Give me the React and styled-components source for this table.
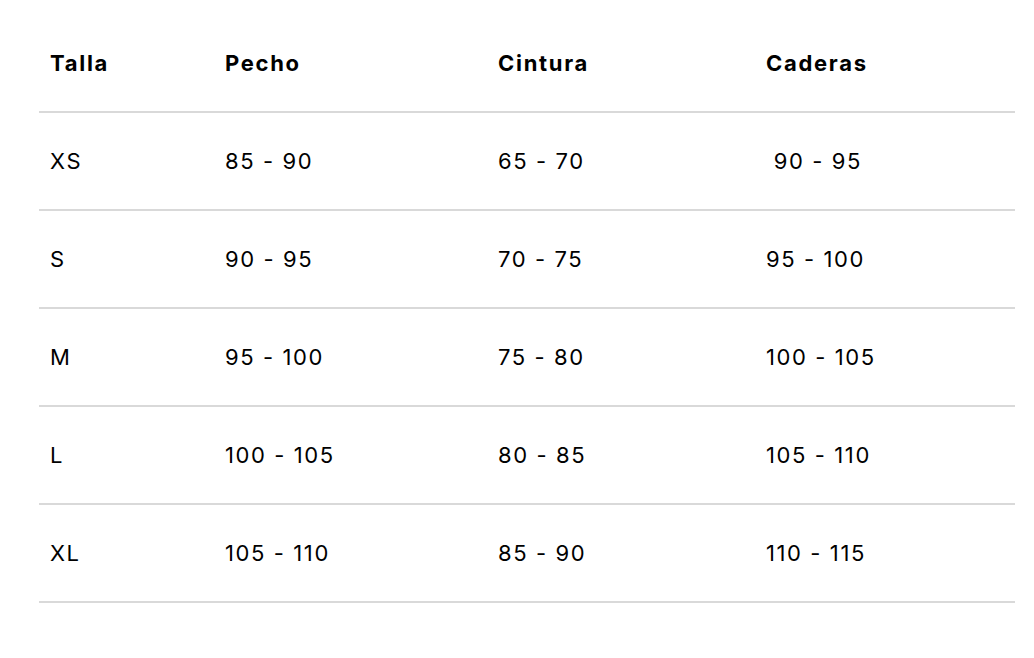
import React from "react";
import styled, { createGlobalStyle } from "styled-components";

const GlobalStyle = createGlobalStyle`
  body {
    margin: 0;
    background: #ffffff;
    font-family: Inter, "Liberation Sans", Arial, sans-serif;
    color: #000000;
  }
`;

const rows = [
  { size: "XS", chest: "85 - 90", waist: "65 - 70", hips: "\u00a090 - 95" },
  { size: "S", chest: "90 - 95", waist: "70 - 75", hips: "95 - 100" },
  { size: "M", chest: "95 - 100", waist: "75 - 80", hips: "100 - 105" },
  { size: "L", chest: "100 - 105", waist: "80 - 85", hips: "105 - 110" },
  { size: "XL", chest: "105 - 110", waist: "85 - 90", hips: "110 - 115" },
];

const App = () => {
  return (
    <>
      <GlobalStyle />
      <StPage>
        <StTable>
          <StRow>
            <StCell head>Talla</StCell>
            <StCell head>Pecho</StCell>
            <StCell head>Cintura</StCell>
            <StCell head>Caderas</StCell>
          </StRow>
          {rows.map((row) => (
            <StRow key={row.size}>
              <StCell>{row.size}</StCell>
              <StCell>{row.chest}</StCell>
              <StCell>{row.waist}</StCell>
              <StCell>{row.hips}</StCell>
            </StRow>
          ))}
        </StTable>
      </StPage>
    </>
  );
};

export default App;

const StPage = styled.div`
  padding: 15px 19px 0 39px;
`;

const StTable = styled.div`
  display: flex;
  flex-direction: column;
  width: 976px;
`;

const StRow = styled.div`
  display: grid;
  grid-template-columns: 175px 273px 268px 1fr;
  height: 96px;
  align-items: center;
  border-bottom: 2px solid #d9d9d9;
`;

const StCell = styled.div`
  padding-left: 11px;
  font-size: 22px;
  font-weight: ${(props) => (props.head ? 700 : 400)};
  letter-spacing: ${(props) => (props.head ? "1.7px" : "1.6px")};
  white-space: pre;
`;
